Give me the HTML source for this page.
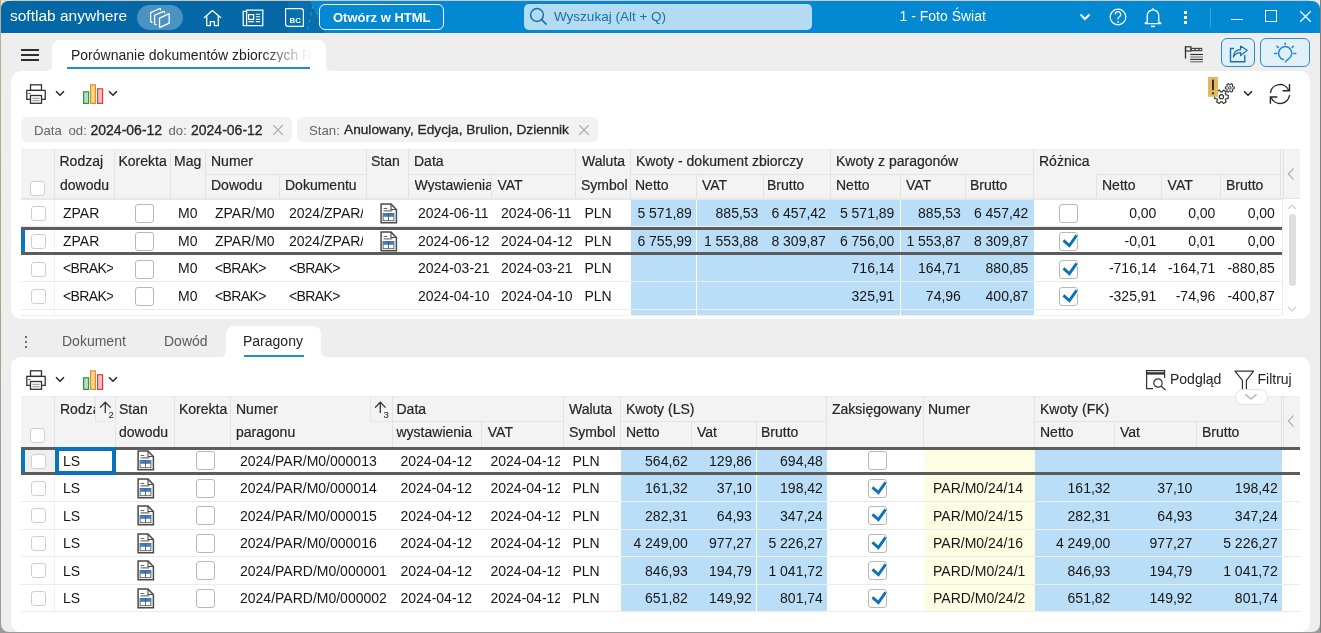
<!DOCTYPE html>
<html><head><meta charset="utf-8"><style>
*{margin:0;padding:0}
html,body{width:1321px;height:633px;overflow:hidden;background:#eee}
div,svg{position:absolute}
.t{white-space:nowrap;font-family:"Liberation Sans",sans-serif}
</style></head>
<body style="font-family:'Liberation Sans',sans-serif">
<div id="root" style="left:0;top:0;width:1321px;height:633px;overflow:hidden;will-change:transform">
<div style="left:0px;top:0px;width:1321px;height:633px;background:#9c9c9c"></div>
<div style="left:0px;top:0px;width:1321px;height:1px;background:#d3c3b8"></div>
<div style="left:0px;top:0px;width:12px;height:12px;background:#e6e0c4"></div>
<div style="left:1309px;top:0px;width:12px;height:12px;background:#e9e6e4"></div>
<div style="left:0px;top:0px;width:1px;height:633px;background:linear-gradient(#b4b29a,#a5a38e 60%,#9a9a9a)"></div>
<div style="left:1px;top:1px;width:1319px;height:631px;background:#eeeeee;border-radius:8px"></div>
<div style="left:1px;top:1px;width:1319px;height:32px;background:#0389d2;border-radius:8px 8px 0 0"></div>
<div style="left:1px;top:1px;width:330px;height:32px;background:#0368a5;border-radius:8px 0 0 0;clip-path:polygon(0 0,309px 0,324px 32px,0 32px)"></div>
<div style="left:288px;top:1px;width:40px;height:32px;background:#0670ae;clip-path:polygon(0 0,21px 0,36px 32px,0 32px)"></div>
<div class="t" style="left:10px;top:7.88px;font-size:15.5px;line-height:15.5px;color:#fff;">softlab anywhere</div>
<div style="left:137px;top:5px;width:46px;height:25px;background:#4a92c1;border-radius:13px"></div>
<div style="left:319px;top:4px;width:125px;height:26px;border:1px solid #fff;border-radius:6px;box-sizing:border-box"></div>
<div class="t" style="left:333px;top:10.50px;font-size:13px;line-height:13px;color:#fff;font-weight:700;">Otwórz w HTML</div>
<div style="left:524px;top:4px;width:288px;height:26px;background:#b3dcf3;border-radius:5px"></div>
<div class="t" style="left:554px;top:10.07px;font-size:13.5px;line-height:13.5px;color:#1b6fa8;">Wyszukaj (Alt + Q)</div>
<div class="t" style="left:899.5px;top:9.15px;font-size:14px;line-height:14px;color:#fff;">1 - Foto Świat</div>
<div style="left:52px;top:40px;width:274px;height:31px;background:#fff;border-radius:8px 8px 0 0"></div>
<div style="left:326px;top:66px;width:5px;height:5px;background:radial-gradient(circle at 100% 0,#eeeeee 4.6px,#fff 5.2px)"></div>
<div style="left:47px;top:66px;width:5px;height:5px;background:radial-gradient(circle at 0 0,#eeeeee 4.6px,#fff 5.2px)"></div>
<div class="t" style="left:71px;top:48px;width:240px;overflow:hidden;font-size:14px;line-height:14px;color:#222;-webkit-mask-image:linear-gradient(90deg,#000 0,#000 190px,rgba(0,0,0,.04) 236px);mask-image:linear-gradient(90deg,#000 0,#000 190px,rgba(0,0,0,.04) 236px)">Porównanie dokumentów zbiorczych R</div>
<div style="left:67px;top:67px;width:243px;height:2px;background:#1a8fd8"></div>
<div style="left:1221px;top:38px;width:34px;height:29px;background:#e1eff9;border:1px solid #2f8bca;border-radius:6px;box-sizing:border-box"></div>
<div style="left:1260px;top:38px;width:50px;height:29px;background:#e1eff9;border:1px solid #2f8bca;border-radius:6px;box-sizing:border-box"></div>
<div style="left:11px;top:71px;width:1299px;height:248px;background:#fff;border-radius:10px"></div>
<div style="left:21px;top:117px;width:271px;height:25px;background:#f2f2f2;border-radius:6px"></div>
<div style="left:297px;top:117px;width:301px;height:25px;background:#f2f2f2;border-radius:6px"></div>
<div style="left:226px;top:326px;width:95px;height:32px;background:#fff;border-radius:8px 8px 0 0"></div>
<div style="left:221px;top:352px;width:5px;height:5px;background:radial-gradient(circle at 0 0,#eeeeee 4.6px,#fff 5.2px)"></div>
<div style="left:321px;top:352px;width:5px;height:5px;background:radial-gradient(circle at 100% 0,#eeeeee 4.6px,#fff 5.2px)"></div>
<div class="t" style="left:62px;top:334.15px;font-size:14px;line-height:14px;color:#5c5c5c;">Dokument</div>
<div class="t" style="left:164px;top:334.15px;font-size:14px;line-height:14px;color:#5c5c5c;">Dowód</div>
<div class="t" style="left:243px;top:334.15px;font-size:14px;line-height:14px;color:#222;">Paragony</div>
<div style="left:244px;top:355px;width:60px;height:2px;background:#1a8fd8"></div>
<div style="left:11px;top:357px;width:1299px;height:274.5px;background:#fff;border-radius:10px 10px 9px 9px"></div>
<div style="left:21px;top:149px;width:1279px;height:50px;background:#f3f3f3"></div>
<div style="left:21px;top:149px;width:1279px;height:1px;background:#ececec"></div>
<div style="left:21px;top:198px;width:1279px;height:1px;background:#e6e6e6"></div>
<div style="left:54px;top:149px;width:1px;height:50px;background:#e3e3e3"></div>
<div style="left:114px;top:149px;width:1px;height:50px;background:#e3e3e3"></div>
<div style="left:170px;top:149px;width:1px;height:50px;background:#e3e3e3"></div>
<div style="left:205px;top:149px;width:1px;height:50px;background:#e3e3e3"></div>
<div style="left:366px;top:149px;width:1px;height:50px;background:#e3e3e3"></div>
<div style="left:408px;top:149px;width:1px;height:50px;background:#e3e3e3"></div>
<div style="left:575px;top:149px;width:1px;height:50px;background:#e3e3e3"></div>
<div style="left:630px;top:149px;width:1px;height:50px;background:#e3e3e3"></div>
<div style="left:830px;top:149px;width:1px;height:50px;background:#e3e3e3"></div>
<div style="left:1033px;top:149px;width:1px;height:50px;background:#e3e3e3"></div>
<div style="left:1280px;top:149px;width:1px;height:50px;background:#e3e3e3"></div>
<div style="left:279px;top:174px;width:1px;height:25px;background:#e3e3e3"></div>
<div style="left:491px;top:174px;width:1px;height:25px;background:#e3e3e3"></div>
<div style="left:696px;top:174px;width:1px;height:25px;background:#e3e3e3"></div>
<div style="left:763px;top:174px;width:1px;height:25px;background:#e3e3e3"></div>
<div style="left:900px;top:174px;width:1px;height:25px;background:#e3e3e3"></div>
<div style="left:965px;top:174px;width:1px;height:25px;background:#e3e3e3"></div>
<div style="left:1096px;top:174px;width:1px;height:25px;background:#e3e3e3"></div>
<div style="left:1161px;top:174px;width:1px;height:25px;background:#e3e3e3"></div>
<div style="left:1220px;top:174px;width:1px;height:25px;background:#e3e3e3"></div>
<div style="left:205px;top:174px;width:161px;height:1px;background:#e3e3e3"></div>
<div style="left:408px;top:174px;width:167px;height:1px;background:#e3e3e3"></div>
<div style="left:630px;top:174px;width:200px;height:1px;background:#e3e3e3"></div>
<div style="left:830px;top:174px;width:203px;height:1px;background:#e3e3e3"></div>
<div style="left:1096px;top:174px;width:184px;height:1px;background:#e3e3e3"></div>
<div class="t" style="left:59.5px;top:154.15px;font-size:14px;line-height:14px;color:#262626;-webkit-text-stroke:0.2px #262626;">Rodzaj</div>
<div class="t" style="left:118.5px;top:154.15px;font-size:14px;line-height:14px;color:#262626;-webkit-text-stroke:0.2px #262626;">Korekta</div>
<div class="t" style="left:174px;top:154.15px;font-size:14px;line-height:14px;color:#262626;-webkit-text-stroke:0.2px #262626;">Mag</div>
<div class="t" style="left:211px;top:154.15px;font-size:14px;line-height:14px;color:#262626;-webkit-text-stroke:0.2px #262626;">Numer</div>
<div class="t" style="left:371px;top:154.15px;font-size:14px;line-height:14px;color:#262626;-webkit-text-stroke:0.2px #262626;">Stan</div>
<div class="t" style="left:414px;top:154.15px;font-size:14px;line-height:14px;color:#262626;-webkit-text-stroke:0.2px #262626;">Data</div>
<div class="t" style="left:582px;top:154.15px;font-size:14px;line-height:14px;color:#262626;-webkit-text-stroke:0.2px #262626;">Waluta</div>
<div class="t" style="left:636px;top:154.15px;font-size:14px;line-height:14px;color:#262626;-webkit-text-stroke:0.2px #262626;">Kwoty - dokument zbiorczy</div>
<div class="t" style="left:836px;top:154.15px;font-size:14px;line-height:14px;color:#262626;-webkit-text-stroke:0.2px #262626;">Kwoty z paragonów</div>
<div class="t" style="left:1039px;top:154.15px;font-size:14px;line-height:14px;color:#262626;-webkit-text-stroke:0.2px #262626;">Różnica</div>
<div class="t" style="left:60px;top:178.15px;font-size:14px;line-height:14px;color:#262626;-webkit-text-stroke:0.2px #262626;">dowodu</div>
<div class="t" style="left:211px;top:178.15px;font-size:14px;line-height:14px;color:#262626;-webkit-text-stroke:0.2px #262626;">Dowodu</div>
<div class="t" style="left:285px;top:178.15px;font-size:14px;line-height:14px;color:#262626;-webkit-text-stroke:0.2px #262626;">Dokumentu</div>
<div class="t" style="left:414.5px;top:178.15px;font-size:14px;line-height:14px;color:#262626;width:76.5px;overflow:hidden;-webkit-text-stroke:0.2px #262626;">Wystawienia</div>
<div class="t" style="left:497.4px;top:178.15px;font-size:14px;line-height:14px;color:#262626;-webkit-text-stroke:0.2px #262626;">VAT</div>
<div class="t" style="left:581px;top:178.15px;font-size:14px;line-height:14px;color:#262626;-webkit-text-stroke:0.2px #262626;">Symbol</div>
<div class="t" style="left:635px;top:178.15px;font-size:14px;line-height:14px;color:#262626;-webkit-text-stroke:0.2px #262626;">Netto</div>
<div class="t" style="left:702px;top:178.15px;font-size:14px;line-height:14px;color:#262626;-webkit-text-stroke:0.2px #262626;">VAT</div>
<div class="t" style="left:767px;top:178.15px;font-size:14px;line-height:14px;color:#262626;-webkit-text-stroke:0.2px #262626;">Brutto</div>
<div class="t" style="left:836px;top:178.15px;font-size:14px;line-height:14px;color:#262626;-webkit-text-stroke:0.2px #262626;">Netto</div>
<div class="t" style="left:906px;top:178.15px;font-size:14px;line-height:14px;color:#262626;-webkit-text-stroke:0.2px #262626;">VAT</div>
<div class="t" style="left:970px;top:178.15px;font-size:14px;line-height:14px;color:#262626;-webkit-text-stroke:0.2px #262626;">Brutto</div>
<div class="t" style="left:1102px;top:178.15px;font-size:14px;line-height:14px;color:#262626;-webkit-text-stroke:0.2px #262626;">Netto</div>
<div class="t" style="left:1167.6px;top:178.15px;font-size:14px;line-height:14px;color:#262626;-webkit-text-stroke:0.2px #262626;">VAT</div>
<div class="t" style="left:1226px;top:178.15px;font-size:14px;line-height:14px;color:#262626;-webkit-text-stroke:0.2px #262626;">Brutto</div>
<div style="left:1283px;top:149px;width:1px;height:50px;background:#e3e3e3"></div>
<div style="left:30px;top:181px;width:15px;height:15px;box-sizing:border-box;border:1px solid #cfcfcf;border-radius:3px;background:#fff"></div>
<svg style="position:absolute;left:1286px;top:167px" width="10" height="14" viewBox="0 0 10 14"><path d="M7.5 1.5 L2.5 7 L7.5 12.5" fill="none" stroke="#a0a0a0" stroke-width="1.1"/></svg>
<div style="left:0;top:0;width:1321px;height:316px;overflow:hidden">
<div style="position:absolute;left:631px;top:199px;width:403px;height:28px;background:#bbdef8"></div>
<div style="position:absolute;left:696px;top:199px;width:1px;height:28px;background:#fff"></div>
<div style="position:absolute;left:900px;top:199px;width:1px;height:28px;background:#fff"></div>
<div style="position:absolute;left:21px;top:226px;width:1261px;height:1px;background:#ebebeb"></div>
<div style="position:absolute;left:631px;top:226px;width:403px;height:1px;background:#efefef"></div>
<div style="position:absolute;left:54px;top:199px;width:1px;height:28px;background:#f0f0f0"></div>
<div class="t" style="left:63px;width:50px;overflow:hidden;top:206.15px;font-size:14px;line-height:14px;color:#161616;">ZPAR</div>
<div class="t" style="left:178px;top:206.15px;font-size:14px;line-height:14px;color:#161616;">M0</div>
<div class="t" style="left:215px;width:59.5px;overflow:hidden;top:206.15px;font-size:14px;line-height:14px;color:#161616;">ZPAR/M0/24/1</div>
<div class="t" style="left:289px;width:74px;overflow:hidden;top:206.15px;font-size:14px;line-height:14px;color:#161616;">2024/ZPAR/M0/1</div>
<div class="t" style="left:418px;top:206.15px;font-size:14px;line-height:14px;color:#161616;">2024-06-11</div>
<div class="t" style="left:501px;top:206.15px;font-size:14px;line-height:14px;color:#161616;">2024-06-11</div>
<div class="t" style="left:584.5px;top:206.15px;font-size:14px;line-height:14px;color:#161616;">PLN</div>
<div class="t" style="left:491.90px;width:200px;text-align:right;top:206.15px;font-size:14px;line-height:14px;color:#161616">5 571,89</div>
<div class="t" style="left:558.40px;width:200px;text-align:right;top:206.15px;font-size:14px;line-height:14px;color:#161616">885,53</div>
<div class="t" style="left:625.90px;width:200px;text-align:right;top:206.15px;font-size:14px;line-height:14px;color:#161616">6 457,42</div>
<div class="t" style="left:694.40px;width:200px;text-align:right;top:206.15px;font-size:14px;line-height:14px;color:#161616">5 571,89</div>
<div class="t" style="left:760.90px;width:200px;text-align:right;top:206.15px;font-size:14px;line-height:14px;color:#161616">885,53</div>
<div class="t" style="left:828.40px;width:200px;text-align:right;top:206.15px;font-size:14px;line-height:14px;color:#161616">6 457,42</div>
<div class="t" style="left:956.40px;width:200px;text-align:right;top:206.15px;font-size:14px;line-height:14px;color:#161616">0,00</div>
<div class="t" style="left:1015.40px;width:200px;text-align:right;top:206.15px;font-size:14px;line-height:14px;color:#161616">0,00</div>
<div class="t" style="left:1074.90px;width:200px;text-align:right;top:206.15px;font-size:14px;line-height:14px;color:#161616">0,00</div>
<div style="left:31px;top:206px;width:15px;height:15px;box-sizing:border-box;border:1px solid #cfcfcf;border-radius:3px;background:#fff"></div>
<div style="left:135px;top:204px;width:19px;height:19px;box-sizing:border-box;border:1.3px solid #b8b8b8;border-radius:3px;background:#fff"></div>
<div style="left:1059px;top:204px;width:19px;height:19px;box-sizing:border-box;border:1.3px solid #b8b8b8;border-radius:3px;background:#fff"></div>
<svg style="position:absolute;left:380px;top:203px" width="18" height="21" viewBox="0 0 18 21"><path d="M1.1 1.1 H11 L16.4 6.5 V19.8 H1.1 Z" fill="#fff" stroke="#4a4a4a" stroke-width="1.5"/><path d="M11 1.1 V6.5 H16.4" fill="none" stroke="#4a4a4a" stroke-width="1.1"/><rect x="3.6" y="5" width="3.6" height="1" fill="#666"/><rect x="3.6" y="7.2" width="8.8" height="1.3" fill="#777"/><rect x="3.1" y="10.5" width="10.8" height="7.2" fill="#fff" stroke="#555" stroke-width="0.9"/><rect x="3.1" y="10.5" width="10.8" height="3.3" fill="#3a80c8"/><rect x="8.1" y="10.5" width="0.9" height="7.2" fill="#555"/></svg>
<div style="position:absolute;left:631px;top:227px;width:403px;height:28px;background:#bbdef8"></div>
<div style="position:absolute;left:696px;top:227px;width:1px;height:28px;background:#fff"></div>
<div style="position:absolute;left:900px;top:227px;width:1px;height:28px;background:#fff"></div>
<div style="position:absolute;left:21px;top:254px;width:1261px;height:1px;background:#ebebeb"></div>
<div style="position:absolute;left:631px;top:254px;width:403px;height:1px;background:#efefef"></div>
<div style="position:absolute;left:54px;top:227px;width:1px;height:28px;background:#f0f0f0"></div>
<div class="t" style="left:63px;width:50px;overflow:hidden;top:234.15px;font-size:14px;line-height:14px;color:#161616;">ZPAR</div>
<div class="t" style="left:178px;top:234.15px;font-size:14px;line-height:14px;color:#161616;">M0</div>
<div class="t" style="left:215px;width:59.5px;overflow:hidden;top:234.15px;font-size:14px;line-height:14px;color:#161616;">ZPAR/M0/24/2</div>
<div class="t" style="left:289px;width:74px;overflow:hidden;top:234.15px;font-size:14px;line-height:14px;color:#161616;">2024/ZPAR/M0/2</div>
<div class="t" style="left:418px;top:234.15px;font-size:14px;line-height:14px;color:#161616;">2024-06-12</div>
<div class="t" style="left:501px;top:234.15px;font-size:14px;line-height:14px;color:#161616;">2024-04-12</div>
<div class="t" style="left:584.5px;top:234.15px;font-size:14px;line-height:14px;color:#161616;">PLN</div>
<div class="t" style="left:491.90px;width:200px;text-align:right;top:234.15px;font-size:14px;line-height:14px;color:#161616">6 755,99</div>
<div class="t" style="left:558.40px;width:200px;text-align:right;top:234.15px;font-size:14px;line-height:14px;color:#161616">1 553,88</div>
<div class="t" style="left:625.90px;width:200px;text-align:right;top:234.15px;font-size:14px;line-height:14px;color:#161616">8 309,87</div>
<div class="t" style="left:694.40px;width:200px;text-align:right;top:234.15px;font-size:14px;line-height:14px;color:#161616">6 756,00</div>
<div class="t" style="left:760.90px;width:200px;text-align:right;top:234.15px;font-size:14px;line-height:14px;color:#161616">1 553,87</div>
<div class="t" style="left:828.40px;width:200px;text-align:right;top:234.15px;font-size:14px;line-height:14px;color:#161616">8 309,87</div>
<div class="t" style="left:956.40px;width:200px;text-align:right;top:234.15px;font-size:14px;line-height:14px;color:#161616">-0,01</div>
<div class="t" style="left:1015.40px;width:200px;text-align:right;top:234.15px;font-size:14px;line-height:14px;color:#161616">0,01</div>
<div class="t" style="left:1074.90px;width:200px;text-align:right;top:234.15px;font-size:14px;line-height:14px;color:#161616">0,00</div>
<div style="left:31px;top:234px;width:15px;height:15px;box-sizing:border-box;border:1px solid #cfcfcf;border-radius:3px;background:#fff"></div>
<div style="left:135px;top:232px;width:19px;height:19px;box-sizing:border-box;border:1.3px solid #b8b8b8;border-radius:3px;background:#fff"></div>
<div style="left:1059px;top:232px;width:19px;height:19px;box-sizing:border-box;border:1.3px solid #b8b8b8;border-radius:3px;background:#fff"></div>
<svg style="position:absolute;left:1059px;top:232px" width="19" height="19" viewBox="0 0 19 19"><path d="M4.4 8.4 L10.4 13.6 L17.6 3.4" fill="none" stroke="#fff" stroke-width="5"/><path d="M4.4 8.4 L10.4 13.6 L17.6 3.4" fill="none" stroke="#0a72b8" stroke-width="2.8"/></svg>
<svg style="position:absolute;left:380px;top:231px" width="18" height="21" viewBox="0 0 18 21"><path d="M1.1 1.1 H11 L16.4 6.5 V19.8 H1.1 Z" fill="#fff" stroke="#4a4a4a" stroke-width="1.5"/><path d="M11 1.1 V6.5 H16.4" fill="none" stroke="#4a4a4a" stroke-width="1.1"/><rect x="3.6" y="5" width="3.6" height="1" fill="#666"/><rect x="3.6" y="7.2" width="8.8" height="1.3" fill="#777"/><rect x="3.1" y="10.5" width="10.8" height="7.2" fill="#fff" stroke="#555" stroke-width="0.9"/><rect x="3.1" y="10.5" width="10.8" height="3.3" fill="#3a80c8"/><rect x="8.1" y="10.5" width="0.9" height="7.2" fill="#555"/></svg>
<div style="position:absolute;left:631px;top:255px;width:403px;height:27px;background:#bbdef8"></div>
<div style="position:absolute;left:696px;top:255px;width:1px;height:27px;background:#fff"></div>
<div style="position:absolute;left:900px;top:255px;width:1px;height:27px;background:#fff"></div>
<div style="position:absolute;left:21px;top:281px;width:1261px;height:1px;background:#ebebeb"></div>
<div style="position:absolute;left:631px;top:281px;width:403px;height:1px;background:#efefef"></div>
<div style="position:absolute;left:54px;top:255px;width:1px;height:27px;background:#f0f0f0"></div>
<div class="t" style="left:63px;width:50px;overflow:hidden;top:261.15px;font-size:14px;line-height:14px;color:#161616;letter-spacing:-0.6px">&lt;BRAK&gt;</div>
<div class="t" style="left:178px;top:261.15px;font-size:14px;line-height:14px;color:#161616;">M0</div>
<div class="t" style="left:215px;width:59.5px;overflow:hidden;top:261.15px;font-size:14px;line-height:14px;color:#161616;letter-spacing:-0.6px">&lt;BRAK&gt;</div>
<div class="t" style="left:289px;width:74px;overflow:hidden;top:261.15px;font-size:14px;line-height:14px;color:#161616;letter-spacing:-0.6px">&lt;BRAK&gt;</div>
<div class="t" style="left:418px;top:261.15px;font-size:14px;line-height:14px;color:#161616;">2024-03-21</div>
<div class="t" style="left:501px;top:261.15px;font-size:14px;line-height:14px;color:#161616;">2024-03-21</div>
<div class="t" style="left:584.5px;top:261.15px;font-size:14px;line-height:14px;color:#161616;">PLN</div>
<div class="t" style="left:694.40px;width:200px;text-align:right;top:261.15px;font-size:14px;line-height:14px;color:#161616">716,14</div>
<div class="t" style="left:760.90px;width:200px;text-align:right;top:261.15px;font-size:14px;line-height:14px;color:#161616">164,71</div>
<div class="t" style="left:828.40px;width:200px;text-align:right;top:261.15px;font-size:14px;line-height:14px;color:#161616">880,85</div>
<div class="t" style="left:956.40px;width:200px;text-align:right;top:261.15px;font-size:14px;line-height:14px;color:#161616">-716,14</div>
<div class="t" style="left:1015.40px;width:200px;text-align:right;top:261.15px;font-size:14px;line-height:14px;color:#161616">-164,71</div>
<div class="t" style="left:1074.90px;width:200px;text-align:right;top:261.15px;font-size:14px;line-height:14px;color:#161616">-880,85</div>
<div style="left:31px;top:262px;width:15px;height:15px;box-sizing:border-box;border:1px solid #cfcfcf;border-radius:3px;background:#fff"></div>
<div style="left:135px;top:260px;width:19px;height:19px;box-sizing:border-box;border:1.3px solid #b8b8b8;border-radius:3px;background:#fff"></div>
<div style="left:1059px;top:260px;width:19px;height:19px;box-sizing:border-box;border:1.3px solid #b8b8b8;border-radius:3px;background:#fff"></div>
<svg style="position:absolute;left:1059px;top:260px" width="19" height="19" viewBox="0 0 19 19"><path d="M4.4 8.4 L10.4 13.6 L17.6 3.4" fill="none" stroke="#fff" stroke-width="5"/><path d="M4.4 8.4 L10.4 13.6 L17.6 3.4" fill="none" stroke="#0a72b8" stroke-width="2.8"/></svg>
<div style="position:absolute;left:631px;top:282px;width:403px;height:28px;background:#bbdef8"></div>
<div style="position:absolute;left:696px;top:282px;width:1px;height:28px;background:#fff"></div>
<div style="position:absolute;left:900px;top:282px;width:1px;height:28px;background:#fff"></div>
<div style="position:absolute;left:21px;top:309px;width:1261px;height:1px;background:#ebebeb"></div>
<div style="position:absolute;left:631px;top:309px;width:403px;height:1px;background:#efefef"></div>
<div style="position:absolute;left:54px;top:282px;width:1px;height:28px;background:#f0f0f0"></div>
<div class="t" style="left:63px;width:50px;overflow:hidden;top:289.15px;font-size:14px;line-height:14px;color:#161616;letter-spacing:-0.6px">&lt;BRAK&gt;</div>
<div class="t" style="left:178px;top:289.15px;font-size:14px;line-height:14px;color:#161616;">M0</div>
<div class="t" style="left:215px;width:59.5px;overflow:hidden;top:289.15px;font-size:14px;line-height:14px;color:#161616;letter-spacing:-0.6px">&lt;BRAK&gt;</div>
<div class="t" style="left:289px;width:74px;overflow:hidden;top:289.15px;font-size:14px;line-height:14px;color:#161616;letter-spacing:-0.6px">&lt;BRAK&gt;</div>
<div class="t" style="left:418px;top:289.15px;font-size:14px;line-height:14px;color:#161616;">2024-04-10</div>
<div class="t" style="left:501px;top:289.15px;font-size:14px;line-height:14px;color:#161616;">2024-04-10</div>
<div class="t" style="left:584.5px;top:289.15px;font-size:14px;line-height:14px;color:#161616;">PLN</div>
<div class="t" style="left:694.40px;width:200px;text-align:right;top:289.15px;font-size:14px;line-height:14px;color:#161616">325,91</div>
<div class="t" style="left:760.90px;width:200px;text-align:right;top:289.15px;font-size:14px;line-height:14px;color:#161616">74,96</div>
<div class="t" style="left:828.40px;width:200px;text-align:right;top:289.15px;font-size:14px;line-height:14px;color:#161616">400,87</div>
<div class="t" style="left:956.40px;width:200px;text-align:right;top:289.15px;font-size:14px;line-height:14px;color:#161616">-325,91</div>
<div class="t" style="left:1015.40px;width:200px;text-align:right;top:289.15px;font-size:14px;line-height:14px;color:#161616">-74,96</div>
<div class="t" style="left:1074.90px;width:200px;text-align:right;top:289.15px;font-size:14px;line-height:14px;color:#161616">-400,87</div>
<div style="left:31px;top:289px;width:15px;height:15px;box-sizing:border-box;border:1px solid #cfcfcf;border-radius:3px;background:#fff"></div>
<div style="left:135px;top:287px;width:19px;height:19px;box-sizing:border-box;border:1.3px solid #b8b8b8;border-radius:3px;background:#fff"></div>
<div style="left:1059px;top:287px;width:19px;height:19px;box-sizing:border-box;border:1.3px solid #b8b8b8;border-radius:3px;background:#fff"></div>
<svg style="position:absolute;left:1059px;top:287px" width="19" height="19" viewBox="0 0 19 19"><path d="M4.4 8.4 L10.4 13.6 L17.6 3.4" fill="none" stroke="#fff" stroke-width="5"/><path d="M4.4 8.4 L10.4 13.6 L17.6 3.4" fill="none" stroke="#0a72b8" stroke-width="2.8"/></svg>
<div style="position:absolute;left:631px;top:310px;width:403px;height:28px;background:#bbdef8"></div>
<div style="position:absolute;left:696px;top:310px;width:1px;height:28px;background:#fff"></div>
<div style="position:absolute;left:900px;top:310px;width:1px;height:28px;background:#fff"></div>
<div style="position:absolute;left:21px;top:337px;width:1261px;height:1px;background:#ebebeb"></div>
<div style="position:absolute;left:631px;top:337px;width:403px;height:1px;background:#efefef"></div>
<div style="position:absolute;left:54px;top:310px;width:1px;height:28px;background:#f0f0f0"></div>
<div style="left:31px;top:317px;width:15px;height:15px;box-sizing:border-box;border:1px solid #cfcfcf;border-radius:3px;background:#fff"></div>
<div style="left:135px;top:315px;width:19px;height:19px;box-sizing:border-box;border:1.3px solid #b8b8b8;border-radius:3px;background:#fff"></div>
<div style="left:1059px;top:315px;width:19px;height:19px;box-sizing:border-box;border:1.3px solid #b8b8b8;border-radius:3px;background:#fff"></div>
</div>
<div style="left:21px;top:199px;width:1262px;height:1px;background:#e8e8e8"></div>
<div style="left:21px;top:227px;width:1261px;height:3px;background:#5c5c5c"></div>
<div style="left:21px;top:252px;width:1261px;height:3px;background:#5c5c5c"></div>
<div style="left:21px;top:230px;width:4px;height:22px;background:#0a78c0"></div>
<svg style="position:absolute;left:1286px;top:203px" width="12" height="8" viewBox="0 0 12 8"><path d="M2 6 L6 2 L10 6" fill="none" stroke="#cfcfcf" stroke-width="1.2"/></svg>
<div style="left:1289px;top:214px;width:7px;height:72px;background:#dedede;border-radius:4px"></div>
<div style="left:1282px;top:199px;width:1px;height:117px;background:#ececec"></div>
<div style="left:21px;top:315px;width:1262px;height:1px;background:#f0f0f0"></div>
<svg style="position:absolute;left:1286px;top:305px" width="12" height="8" viewBox="0 0 12 8"><path d="M2 2 L6 6 L10 2" fill="none" stroke="#cfcfcf" stroke-width="1.2"/></svg>
<div style="left:21px;top:396px;width:1279px;height:51px;background:#f3f3f3"></div>
<div style="left:21px;top:396px;width:1279px;height:1px;background:#ececec"></div>
<div style="left:54px;top:396px;width:1px;height:51px;background:#e3e3e3"></div>
<div style="left:115px;top:396px;width:1px;height:51px;background:#e3e3e3"></div>
<div style="left:174px;top:396px;width:1px;height:51px;background:#e3e3e3"></div>
<div style="left:230px;top:396px;width:1px;height:51px;background:#e3e3e3"></div>
<div style="left:392px;top:396px;width:1px;height:51px;background:#e3e3e3"></div>
<div style="left:563px;top:396px;width:1px;height:51px;background:#e3e3e3"></div>
<div style="left:620px;top:396px;width:1px;height:51px;background:#e3e3e3"></div>
<div style="left:826px;top:396px;width:1px;height:51px;background:#e3e3e3"></div>
<div style="left:923px;top:396px;width:1px;height:51px;background:#e3e3e3"></div>
<div style="left:1034px;top:396px;width:1px;height:51px;background:#e3e3e3"></div>
<div style="left:1281px;top:396px;width:1px;height:51px;background:#e3e3e3"></div>
<div style="left:481px;top:421px;width:1px;height:26px;background:#e3e3e3"></div>
<div style="left:691px;top:421px;width:1px;height:26px;background:#e3e3e3"></div>
<div style="left:756px;top:421px;width:1px;height:26px;background:#e3e3e3"></div>
<div style="left:1114px;top:421px;width:1px;height:26px;background:#e3e3e3"></div>
<div style="left:1196px;top:421px;width:1px;height:26px;background:#e3e3e3"></div>
<div style="left:392px;top:421px;width:171px;height:1px;background:#e3e3e3"></div>
<div style="left:620px;top:421px;width:206px;height:1px;background:#e3e3e3"></div>
<div style="left:1034px;top:421px;width:247px;height:1px;background:#e3e3e3"></div>
<div class="t" style="left:60px;top:402.15px;font-size:14px;line-height:14px;color:#262626;width:35px;overflow:hidden;-webkit-text-stroke:0.2px #262626;">Rodzaj</div>
<div class="t" style="left:119px;top:402.15px;font-size:14px;line-height:14px;color:#262626;-webkit-text-stroke:0.2px #262626;">Stan</div>
<div class="t" style="left:179px;top:402.15px;font-size:14px;line-height:14px;color:#262626;-webkit-text-stroke:0.2px #262626;">Korekta</div>
<div class="t" style="left:236px;top:402.15px;font-size:14px;line-height:14px;color:#262626;-webkit-text-stroke:0.2px #262626;">Numer</div>
<div class="t" style="left:396.5px;top:402.15px;font-size:14px;line-height:14px;color:#262626;-webkit-text-stroke:0.2px #262626;">Data</div>
<div class="t" style="left:569px;top:402.15px;font-size:14px;line-height:14px;color:#262626;-webkit-text-stroke:0.2px #262626;">Waluta</div>
<div class="t" style="left:626px;top:402.15px;font-size:14px;line-height:14px;color:#262626;-webkit-text-stroke:0.2px #262626;">Kwoty (LS)</div>
<div class="t" style="left:832px;top:402.15px;font-size:14px;line-height:14px;color:#262626;-webkit-text-stroke:0.2px #262626;">Zaksięgowany</div>
<div class="t" style="left:928px;top:402.15px;font-size:14px;line-height:14px;color:#262626;-webkit-text-stroke:0.2px #262626;">Numer</div>
<div class="t" style="left:1040px;top:402.15px;font-size:14px;line-height:14px;color:#262626;-webkit-text-stroke:0.2px #262626;">Kwoty (FK)</div>
<div class="t" style="left:119px;top:425.15px;font-size:14px;line-height:14px;color:#262626;-webkit-text-stroke:0.2px #262626;">dowodu</div>
<div class="t" style="left:236px;top:425.15px;font-size:14px;line-height:14px;color:#262626;-webkit-text-stroke:0.2px #262626;">paragonu</div>
<div class="t" style="left:396.5px;top:425.15px;font-size:14px;line-height:14px;color:#262626;-webkit-text-stroke:0.2px #262626;">wystawienia</div>
<div class="t" style="left:487.8px;top:425.15px;font-size:14px;line-height:14px;color:#262626;-webkit-text-stroke:0.2px #262626;">VAT</div>
<div class="t" style="left:569px;top:425.15px;font-size:14px;line-height:14px;color:#262626;-webkit-text-stroke:0.2px #262626;">Symbol</div>
<div class="t" style="left:626px;top:425.15px;font-size:14px;line-height:14px;color:#262626;-webkit-text-stroke:0.2px #262626;">Netto</div>
<div class="t" style="left:697px;top:425.15px;font-size:14px;line-height:14px;color:#262626;-webkit-text-stroke:0.2px #262626;">Vat</div>
<div class="t" style="left:761px;top:425.15px;font-size:14px;line-height:14px;color:#262626;-webkit-text-stroke:0.2px #262626;">Brutto</div>
<div class="t" style="left:1040px;top:425.15px;font-size:14px;line-height:14px;color:#262626;-webkit-text-stroke:0.2px #262626;">Netto</div>
<div class="t" style="left:1120px;top:425.15px;font-size:14px;line-height:14px;color:#262626;-webkit-text-stroke:0.2px #262626;">Vat</div>
<div class="t" style="left:1202px;top:425.15px;font-size:14px;line-height:14px;color:#262626;-webkit-text-stroke:0.2px #262626;">Brutto</div>
<div style="left:95px;top:397px;width:20px;height:25px;background:#f3f3f3;border-left:1px solid #e4e4e4;border-bottom:1px solid #e8e8e8;box-sizing:border-box"></div><svg style="left:95px;top:397px" width="21" height="25" viewBox="0 0 21 25"><path d="M10.3 16 V5.4 M5 10.6 L10.3 5.2 L15.6 10.6" fill="none" stroke="#333" stroke-width="1.3"/><text x="13.6" y="21" font-size="9.6" font-family="Liberation Sans" fill="#222">2</text></svg>
<div style="left:370px;top:397px;width:21px;height:25px;background:#f3f3f3;border-left:1px solid #e4e4e4;border-bottom:1px solid #e8e8e8;box-sizing:border-box"></div><svg style="left:370px;top:397px" width="21" height="25" viewBox="0 0 21 25"><path d="M10.3 16 V5.4 M5 10.6 L10.3 5.2 L15.6 10.6" fill="none" stroke="#333" stroke-width="1.3"/><text x="13.6" y="21" font-size="9.6" font-family="Liberation Sans" fill="#222">3</text></svg>
<div style="left:1283px;top:396px;width:1px;height:51px;background:#e3e3e3"></div>
<div style="left:30px;top:428px;width:15px;height:15px;box-sizing:border-box;border:1px solid #cfcfcf;border-radius:3px;background:#fff"></div>
<svg style="left:1286px;top:414px" width="10" height="14" viewBox="0 0 10 14"><path d="M7.5 1.5 L2.5 7 L7.5 12.5" fill="none" stroke="#a0a0a0" stroke-width="1.1"/></svg>
<div style="left:621px;top:447px;width:206px;height:28px;background:#bbdef8"></div>
<div style="left:756px;top:447px;width:1px;height:28px;background:#fff"></div>
<div style="left:924px;top:447px;width:111px;height:28px;background:#fdfde4"></div>
<div style="left:1035px;top:447px;width:247px;height:28px;background:#bbdef8"></div>
<div style="left:21px;top:474px;width:1279px;height:1px;background:#ebebeb"></div>
<div style="left:621px;top:474px;width:206px;height:1px;background:#efefef"></div>
<div style="left:1035px;top:474px;width:247px;height:1px;background:#efefef"></div>
<div style="left:54px;top:447px;width:1px;height:28px;background:#f0f0f0"></div>
<div class="t" style="left:63px;top:454.15px;font-size:14px;line-height:14px;color:#161616;">LS</div>
<div class="t" style="left:240px;top:454.15px;font-size:14px;line-height:14px;color:#161616;">2024/PAR/M0/000013</div>
<div class="t" style="left:400.5px;top:454.15px;font-size:14px;line-height:14px;color:#161616;">2024-04-12</div>
<div class="t" style="left:490.5px;width:69px;overflow:hidden;top:454.15px;font-size:14px;line-height:14px;color:#161616;">2024-04-12</div>
<div class="t" style="left:572.5px;top:454.15px;font-size:14px;line-height:14px;color:#161616;">PLN</div>
<div class="t" style="left:487.90px;width:200px;text-align:right;top:454.15px;font-size:14px;line-height:14px;color:#161616">564,62</div>
<div class="t" style="left:551.90px;width:200px;text-align:right;top:454.15px;font-size:14px;line-height:14px;color:#161616">129,86</div>
<div class="t" style="left:622.90px;width:200px;text-align:right;top:454.15px;font-size:14px;line-height:14px;color:#161616">694,48</div>
<div style="left:31px;top:453px;width:15px;height:15px;box-sizing:border-box;border:1px solid #cfcfcf;border-radius:3px;background:#fff"></div>
<svg style="position:absolute;left:137px;top:450px" width="18" height="21" viewBox="0 0 18 21"><path d="M1.1 1.1 H11 L16.4 6.5 V19.8 H1.1 Z" fill="#fff" stroke="#4a4a4a" stroke-width="1.5"/><path d="M11 1.1 V6.5 H16.4" fill="none" stroke="#4a4a4a" stroke-width="1.1"/><rect x="3.6" y="5" width="3.6" height="1" fill="#666"/><rect x="3.6" y="7.2" width="8.8" height="1.3" fill="#777"/><rect x="3.1" y="10.5" width="10.8" height="7.2" fill="#fff" stroke="#555" stroke-width="0.9"/><rect x="3.1" y="10.5" width="10.8" height="3.3" fill="#3a80c8"/><rect x="8.1" y="10.5" width="0.9" height="7.2" fill="#555"/></svg>
<div style="left:196px;top:451px;width:19px;height:19px;box-sizing:border-box;border:1.3px solid #b8b8b8;border-radius:3px;background:#fff"></div>
<div style="left:868px;top:451px;width:19px;height:19px;box-sizing:border-box;border:1.3px solid #b8b8b8;border-radius:3px;background:#fff"></div>
<div style="left:621px;top:475px;width:206px;height:27px;background:#bbdef8"></div>
<div style="left:756px;top:475px;width:1px;height:27px;background:#fff"></div>
<div style="left:924px;top:475px;width:111px;height:27px;background:#fdfde4"></div>
<div style="left:1035px;top:475px;width:247px;height:27px;background:#bbdef8"></div>
<div style="left:21px;top:501px;width:1279px;height:1px;background:#ebebeb"></div>
<div style="left:621px;top:501px;width:206px;height:1px;background:#efefef"></div>
<div style="left:1035px;top:501px;width:247px;height:1px;background:#efefef"></div>
<div style="left:54px;top:475px;width:1px;height:27px;background:#f0f0f0"></div>
<div class="t" style="left:63px;top:481.15px;font-size:14px;line-height:14px;color:#161616;">LS</div>
<div class="t" style="left:240px;top:481.15px;font-size:14px;line-height:14px;color:#161616;">2024/PAR/M0/000014</div>
<div class="t" style="left:400.5px;top:481.15px;font-size:14px;line-height:14px;color:#161616;">2024-04-12</div>
<div class="t" style="left:490.5px;width:69px;overflow:hidden;top:481.15px;font-size:14px;line-height:14px;color:#161616;">2024-04-12</div>
<div class="t" style="left:572.5px;top:481.15px;font-size:14px;line-height:14px;color:#161616;">PLN</div>
<div class="t" style="left:487.90px;width:200px;text-align:right;top:481.15px;font-size:14px;line-height:14px;color:#161616">161,32</div>
<div class="t" style="left:551.90px;width:200px;text-align:right;top:481.15px;font-size:14px;line-height:14px;color:#161616">37,10</div>
<div class="t" style="left:622.90px;width:200px;text-align:right;top:481.15px;font-size:14px;line-height:14px;color:#161616">198,42</div>
<div class="t" style="left:933px;top:481.15px;font-size:14px;line-height:14px;color:#161616;">PAR/M0/24/14</div>
<div class="t" style="left:910.40px;width:200px;text-align:right;top:481.15px;font-size:14px;line-height:14px;color:#161616">161,32</div>
<div class="t" style="left:992.40px;width:200px;text-align:right;top:481.15px;font-size:14px;line-height:14px;color:#161616">37,10</div>
<div class="t" style="left:1077.70px;width:200px;text-align:right;top:481.15px;font-size:14px;line-height:14px;color:#161616">198,42</div>
<div style="left:31px;top:481px;width:15px;height:15px;box-sizing:border-box;border:1px solid #cfcfcf;border-radius:3px;background:#fff"></div>
<svg style="position:absolute;left:137px;top:478px" width="18" height="21" viewBox="0 0 18 21"><path d="M1.1 1.1 H11 L16.4 6.5 V19.8 H1.1 Z" fill="#fff" stroke="#4a4a4a" stroke-width="1.5"/><path d="M11 1.1 V6.5 H16.4" fill="none" stroke="#4a4a4a" stroke-width="1.1"/><rect x="3.6" y="5" width="3.6" height="1" fill="#666"/><rect x="3.6" y="7.2" width="8.8" height="1.3" fill="#777"/><rect x="3.1" y="10.5" width="10.8" height="7.2" fill="#fff" stroke="#555" stroke-width="0.9"/><rect x="3.1" y="10.5" width="10.8" height="3.3" fill="#3a80c8"/><rect x="8.1" y="10.5" width="0.9" height="7.2" fill="#555"/></svg>
<div style="left:196px;top:479px;width:19px;height:19px;box-sizing:border-box;border:1.3px solid #b8b8b8;border-radius:3px;background:#fff"></div>
<div style="left:868px;top:479px;width:19px;height:19px;box-sizing:border-box;border:1.3px solid #b8b8b8;border-radius:3px;background:#fff"></div>
<svg style="position:absolute;left:868px;top:479px" width="19" height="19" viewBox="0 0 19 19"><path d="M4.4 8.4 L10.4 13.6 L17.6 3.4" fill="none" stroke="#fff" stroke-width="5"/><path d="M4.4 8.4 L10.4 13.6 L17.6 3.4" fill="none" stroke="#0a72b8" stroke-width="2.8"/></svg>
<div style="left:621px;top:502px;width:206px;height:28px;background:#bbdef8"></div>
<div style="left:756px;top:502px;width:1px;height:28px;background:#fff"></div>
<div style="left:924px;top:502px;width:111px;height:28px;background:#fdfde4"></div>
<div style="left:1035px;top:502px;width:247px;height:28px;background:#bbdef8"></div>
<div style="left:21px;top:529px;width:1279px;height:1px;background:#ebebeb"></div>
<div style="left:621px;top:529px;width:206px;height:1px;background:#efefef"></div>
<div style="left:1035px;top:529px;width:247px;height:1px;background:#efefef"></div>
<div style="left:54px;top:502px;width:1px;height:28px;background:#f0f0f0"></div>
<div class="t" style="left:63px;top:509.15px;font-size:14px;line-height:14px;color:#161616;">LS</div>
<div class="t" style="left:240px;top:509.15px;font-size:14px;line-height:14px;color:#161616;">2024/PAR/M0/000015</div>
<div class="t" style="left:400.5px;top:509.15px;font-size:14px;line-height:14px;color:#161616;">2024-04-12</div>
<div class="t" style="left:490.5px;width:69px;overflow:hidden;top:509.15px;font-size:14px;line-height:14px;color:#161616;">2024-04-12</div>
<div class="t" style="left:572.5px;top:509.15px;font-size:14px;line-height:14px;color:#161616;">PLN</div>
<div class="t" style="left:487.90px;width:200px;text-align:right;top:509.15px;font-size:14px;line-height:14px;color:#161616">282,31</div>
<div class="t" style="left:551.90px;width:200px;text-align:right;top:509.15px;font-size:14px;line-height:14px;color:#161616">64,93</div>
<div class="t" style="left:622.90px;width:200px;text-align:right;top:509.15px;font-size:14px;line-height:14px;color:#161616">347,24</div>
<div class="t" style="left:933px;top:509.15px;font-size:14px;line-height:14px;color:#161616;">PAR/M0/24/15</div>
<div class="t" style="left:910.40px;width:200px;text-align:right;top:509.15px;font-size:14px;line-height:14px;color:#161616">282,31</div>
<div class="t" style="left:992.40px;width:200px;text-align:right;top:509.15px;font-size:14px;line-height:14px;color:#161616">64,93</div>
<div class="t" style="left:1077.70px;width:200px;text-align:right;top:509.15px;font-size:14px;line-height:14px;color:#161616">347,24</div>
<div style="left:31px;top:508px;width:15px;height:15px;box-sizing:border-box;border:1px solid #cfcfcf;border-radius:3px;background:#fff"></div>
<svg style="position:absolute;left:137px;top:505px" width="18" height="21" viewBox="0 0 18 21"><path d="M1.1 1.1 H11 L16.4 6.5 V19.8 H1.1 Z" fill="#fff" stroke="#4a4a4a" stroke-width="1.5"/><path d="M11 1.1 V6.5 H16.4" fill="none" stroke="#4a4a4a" stroke-width="1.1"/><rect x="3.6" y="5" width="3.6" height="1" fill="#666"/><rect x="3.6" y="7.2" width="8.8" height="1.3" fill="#777"/><rect x="3.1" y="10.5" width="10.8" height="7.2" fill="#fff" stroke="#555" stroke-width="0.9"/><rect x="3.1" y="10.5" width="10.8" height="3.3" fill="#3a80c8"/><rect x="8.1" y="10.5" width="0.9" height="7.2" fill="#555"/></svg>
<div style="left:196px;top:506px;width:19px;height:19px;box-sizing:border-box;border:1.3px solid #b8b8b8;border-radius:3px;background:#fff"></div>
<div style="left:868px;top:506px;width:19px;height:19px;box-sizing:border-box;border:1.3px solid #b8b8b8;border-radius:3px;background:#fff"></div>
<svg style="position:absolute;left:868px;top:506px" width="19" height="19" viewBox="0 0 19 19"><path d="M4.4 8.4 L10.4 13.6 L17.6 3.4" fill="none" stroke="#fff" stroke-width="5"/><path d="M4.4 8.4 L10.4 13.6 L17.6 3.4" fill="none" stroke="#0a72b8" stroke-width="2.8"/></svg>
<div style="left:621px;top:530px;width:206px;height:27px;background:#bbdef8"></div>
<div style="left:756px;top:530px;width:1px;height:27px;background:#fff"></div>
<div style="left:924px;top:530px;width:111px;height:27px;background:#fdfde4"></div>
<div style="left:1035px;top:530px;width:247px;height:27px;background:#bbdef8"></div>
<div style="left:21px;top:556px;width:1279px;height:1px;background:#ebebeb"></div>
<div style="left:621px;top:556px;width:206px;height:1px;background:#efefef"></div>
<div style="left:1035px;top:556px;width:247px;height:1px;background:#efefef"></div>
<div style="left:54px;top:530px;width:1px;height:27px;background:#f0f0f0"></div>
<div class="t" style="left:63px;top:536.15px;font-size:14px;line-height:14px;color:#161616;">LS</div>
<div class="t" style="left:240px;top:536.15px;font-size:14px;line-height:14px;color:#161616;">2024/PAR/M0/000016</div>
<div class="t" style="left:400.5px;top:536.15px;font-size:14px;line-height:14px;color:#161616;">2024-04-12</div>
<div class="t" style="left:490.5px;width:69px;overflow:hidden;top:536.15px;font-size:14px;line-height:14px;color:#161616;">2024-04-12</div>
<div class="t" style="left:572.5px;top:536.15px;font-size:14px;line-height:14px;color:#161616;">PLN</div>
<div class="t" style="left:487.90px;width:200px;text-align:right;top:536.15px;font-size:14px;line-height:14px;color:#161616">4 249,00</div>
<div class="t" style="left:551.90px;width:200px;text-align:right;top:536.15px;font-size:14px;line-height:14px;color:#161616">977,27</div>
<div class="t" style="left:622.90px;width:200px;text-align:right;top:536.15px;font-size:14px;line-height:14px;color:#161616">5 226,27</div>
<div class="t" style="left:933px;top:536.15px;font-size:14px;line-height:14px;color:#161616;">PAR/M0/24/16</div>
<div class="t" style="left:910.40px;width:200px;text-align:right;top:536.15px;font-size:14px;line-height:14px;color:#161616">4 249,00</div>
<div class="t" style="left:992.40px;width:200px;text-align:right;top:536.15px;font-size:14px;line-height:14px;color:#161616">977,27</div>
<div class="t" style="left:1077.70px;width:200px;text-align:right;top:536.15px;font-size:14px;line-height:14px;color:#161616">5 226,27</div>
<div style="left:31px;top:536px;width:15px;height:15px;box-sizing:border-box;border:1px solid #cfcfcf;border-radius:3px;background:#fff"></div>
<svg style="position:absolute;left:137px;top:533px" width="18" height="21" viewBox="0 0 18 21"><path d="M1.1 1.1 H11 L16.4 6.5 V19.8 H1.1 Z" fill="#fff" stroke="#4a4a4a" stroke-width="1.5"/><path d="M11 1.1 V6.5 H16.4" fill="none" stroke="#4a4a4a" stroke-width="1.1"/><rect x="3.6" y="5" width="3.6" height="1" fill="#666"/><rect x="3.6" y="7.2" width="8.8" height="1.3" fill="#777"/><rect x="3.1" y="10.5" width="10.8" height="7.2" fill="#fff" stroke="#555" stroke-width="0.9"/><rect x="3.1" y="10.5" width="10.8" height="3.3" fill="#3a80c8"/><rect x="8.1" y="10.5" width="0.9" height="7.2" fill="#555"/></svg>
<div style="left:196px;top:534px;width:19px;height:19px;box-sizing:border-box;border:1.3px solid #b8b8b8;border-radius:3px;background:#fff"></div>
<div style="left:868px;top:534px;width:19px;height:19px;box-sizing:border-box;border:1.3px solid #b8b8b8;border-radius:3px;background:#fff"></div>
<svg style="position:absolute;left:868px;top:534px" width="19" height="19" viewBox="0 0 19 19"><path d="M4.4 8.4 L10.4 13.6 L17.6 3.4" fill="none" stroke="#fff" stroke-width="5"/><path d="M4.4 8.4 L10.4 13.6 L17.6 3.4" fill="none" stroke="#0a72b8" stroke-width="2.8"/></svg>
<div style="left:621px;top:557px;width:206px;height:28px;background:#bbdef8"></div>
<div style="left:756px;top:557px;width:1px;height:28px;background:#fff"></div>
<div style="left:924px;top:557px;width:111px;height:28px;background:#fdfde4"></div>
<div style="left:1035px;top:557px;width:247px;height:28px;background:#bbdef8"></div>
<div style="left:21px;top:584px;width:1279px;height:1px;background:#ebebeb"></div>
<div style="left:621px;top:584px;width:206px;height:1px;background:#efefef"></div>
<div style="left:1035px;top:584px;width:247px;height:1px;background:#efefef"></div>
<div style="left:54px;top:557px;width:1px;height:28px;background:#f0f0f0"></div>
<div class="t" style="left:63px;top:564.15px;font-size:14px;line-height:14px;color:#161616;">LS</div>
<div class="t" style="left:240px;top:564.15px;font-size:14px;line-height:14px;color:#161616;">2024/PARD/M0/000001</div>
<div class="t" style="left:400.5px;top:564.15px;font-size:14px;line-height:14px;color:#161616;">2024-04-12</div>
<div class="t" style="left:490.5px;width:69px;overflow:hidden;top:564.15px;font-size:14px;line-height:14px;color:#161616;">2024-04-12</div>
<div class="t" style="left:572.5px;top:564.15px;font-size:14px;line-height:14px;color:#161616;">PLN</div>
<div class="t" style="left:487.90px;width:200px;text-align:right;top:564.15px;font-size:14px;line-height:14px;color:#161616">846,93</div>
<div class="t" style="left:551.90px;width:200px;text-align:right;top:564.15px;font-size:14px;line-height:14px;color:#161616">194,79</div>
<div class="t" style="left:622.90px;width:200px;text-align:right;top:564.15px;font-size:14px;line-height:14px;color:#161616">1 041,72</div>
<div class="t" style="left:933px;top:564.15px;font-size:14px;line-height:14px;color:#161616;">PARD/M0/24/1</div>
<div class="t" style="left:910.40px;width:200px;text-align:right;top:564.15px;font-size:14px;line-height:14px;color:#161616">846,93</div>
<div class="t" style="left:992.40px;width:200px;text-align:right;top:564.15px;font-size:14px;line-height:14px;color:#161616">194,79</div>
<div class="t" style="left:1077.70px;width:200px;text-align:right;top:564.15px;font-size:14px;line-height:14px;color:#161616">1 041,72</div>
<div style="left:31px;top:563px;width:15px;height:15px;box-sizing:border-box;border:1px solid #cfcfcf;border-radius:3px;background:#fff"></div>
<svg style="position:absolute;left:137px;top:560px" width="18" height="21" viewBox="0 0 18 21"><path d="M1.1 1.1 H11 L16.4 6.5 V19.8 H1.1 Z" fill="#fff" stroke="#4a4a4a" stroke-width="1.5"/><path d="M11 1.1 V6.5 H16.4" fill="none" stroke="#4a4a4a" stroke-width="1.1"/><rect x="3.6" y="5" width="3.6" height="1" fill="#666"/><rect x="3.6" y="7.2" width="8.8" height="1.3" fill="#777"/><rect x="3.1" y="10.5" width="10.8" height="7.2" fill="#fff" stroke="#555" stroke-width="0.9"/><rect x="3.1" y="10.5" width="10.8" height="3.3" fill="#3a80c8"/><rect x="8.1" y="10.5" width="0.9" height="7.2" fill="#555"/></svg>
<div style="left:196px;top:561px;width:19px;height:19px;box-sizing:border-box;border:1.3px solid #b8b8b8;border-radius:3px;background:#fff"></div>
<div style="left:868px;top:561px;width:19px;height:19px;box-sizing:border-box;border:1.3px solid #b8b8b8;border-radius:3px;background:#fff"></div>
<svg style="position:absolute;left:868px;top:561px" width="19" height="19" viewBox="0 0 19 19"><path d="M4.4 8.4 L10.4 13.6 L17.6 3.4" fill="none" stroke="#fff" stroke-width="5"/><path d="M4.4 8.4 L10.4 13.6 L17.6 3.4" fill="none" stroke="#0a72b8" stroke-width="2.8"/></svg>
<div style="left:621px;top:585px;width:206px;height:27px;background:#bbdef8"></div>
<div style="left:756px;top:585px;width:1px;height:27px;background:#fff"></div>
<div style="left:924px;top:585px;width:111px;height:27px;background:#fdfde4"></div>
<div style="left:1035px;top:585px;width:247px;height:27px;background:#bbdef8"></div>
<div style="left:21px;top:611px;width:1279px;height:1px;background:#ebebeb"></div>
<div style="left:621px;top:611px;width:206px;height:1px;background:#efefef"></div>
<div style="left:1035px;top:611px;width:247px;height:1px;background:#efefef"></div>
<div style="left:54px;top:585px;width:1px;height:27px;background:#f0f0f0"></div>
<div class="t" style="left:63px;top:591.15px;font-size:14px;line-height:14px;color:#161616;">LS</div>
<div class="t" style="left:240px;top:591.15px;font-size:14px;line-height:14px;color:#161616;">2024/PARD/M0/000002</div>
<div class="t" style="left:400.5px;top:591.15px;font-size:14px;line-height:14px;color:#161616;">2024-04-12</div>
<div class="t" style="left:490.5px;width:69px;overflow:hidden;top:591.15px;font-size:14px;line-height:14px;color:#161616;">2024-04-12</div>
<div class="t" style="left:572.5px;top:591.15px;font-size:14px;line-height:14px;color:#161616;">PLN</div>
<div class="t" style="left:487.90px;width:200px;text-align:right;top:591.15px;font-size:14px;line-height:14px;color:#161616">651,82</div>
<div class="t" style="left:551.90px;width:200px;text-align:right;top:591.15px;font-size:14px;line-height:14px;color:#161616">149,92</div>
<div class="t" style="left:622.90px;width:200px;text-align:right;top:591.15px;font-size:14px;line-height:14px;color:#161616">801,74</div>
<div class="t" style="left:933px;top:591.15px;font-size:14px;line-height:14px;color:#161616;">PARD/M0/24/2</div>
<div class="t" style="left:910.40px;width:200px;text-align:right;top:591.15px;font-size:14px;line-height:14px;color:#161616">651,82</div>
<div class="t" style="left:992.40px;width:200px;text-align:right;top:591.15px;font-size:14px;line-height:14px;color:#161616">149,92</div>
<div class="t" style="left:1077.70px;width:200px;text-align:right;top:591.15px;font-size:14px;line-height:14px;color:#161616">801,74</div>
<div style="left:31px;top:591px;width:15px;height:15px;box-sizing:border-box;border:1px solid #cfcfcf;border-radius:3px;background:#fff"></div>
<svg style="position:absolute;left:137px;top:588px" width="18" height="21" viewBox="0 0 18 21"><path d="M1.1 1.1 H11 L16.4 6.5 V19.8 H1.1 Z" fill="#fff" stroke="#4a4a4a" stroke-width="1.5"/><path d="M11 1.1 V6.5 H16.4" fill="none" stroke="#4a4a4a" stroke-width="1.1"/><rect x="3.6" y="5" width="3.6" height="1" fill="#666"/><rect x="3.6" y="7.2" width="8.8" height="1.3" fill="#777"/><rect x="3.1" y="10.5" width="10.8" height="7.2" fill="#fff" stroke="#555" stroke-width="0.9"/><rect x="3.1" y="10.5" width="10.8" height="3.3" fill="#3a80c8"/><rect x="8.1" y="10.5" width="0.9" height="7.2" fill="#555"/></svg>
<div style="left:196px;top:589px;width:19px;height:19px;box-sizing:border-box;border:1.3px solid #b8b8b8;border-radius:3px;background:#fff"></div>
<div style="left:868px;top:589px;width:19px;height:19px;box-sizing:border-box;border:1.3px solid #b8b8b8;border-radius:3px;background:#fff"></div>
<svg style="position:absolute;left:868px;top:589px" width="19" height="19" viewBox="0 0 19 19"><path d="M4.4 8.4 L10.4 13.6 L17.6 3.4" fill="none" stroke="#fff" stroke-width="5"/><path d="M4.4 8.4 L10.4 13.6 L17.6 3.4" fill="none" stroke="#0a72b8" stroke-width="2.8"/></svg>
<div style="left:25px;top:450px;width:29px;height:22px;background:#efefef"></div>
<div style="left:31px;top:454px;width:15px;height:15px;box-sizing:border-box;border:1px solid #cfcfcf;border-radius:3px;background:#fff"></div>
<div style="left:21px;top:447px;width:1279px;height:3px;background:#5c5c5c"></div>
<div style="left:21px;top:472px;width:1279px;height:3px;background:#5c5c5c"></div>
<div style="left:21px;top:450px;width:4px;height:22px;background:#0a78c0"></div>
<div style="left:55px;top:447px;width:61px;height:28px;border:4px solid #0a72b8;box-sizing:border-box;background:#fff"></div>
<div class="t" style="left:63px;top:454.15px;font-size:14px;line-height:14px;color:#161616;">LS</div>
<div style="left:21px;top:49px;width:18px;height:2.2px;background:#2e2e2e"></div>
<div style="left:21px;top:54px;width:18px;height:2.2px;background:#2e2e2e"></div>
<div style="left:21px;top:59px;width:18px;height:2.2px;background:#2e2e2e"></div>
<svg style="left:26px;top:84px" width="20" height="20" viewBox="0 0 20 20"><rect x="4.5" y="0.8" width="11" height="5.6" fill="none" stroke="#333" stroke-width="1.3"/><path d="M4.2 15.4 H0.8 V6.4 H19.2 V15.4 H15.8" fill="none" stroke="#333" stroke-width="1.3"/><rect x="4.5" y="11.5" width="11" height="7.8" fill="#fff" stroke="#333" stroke-width="1.3"/><path d="M6.4 14.3 H13.6 M6.4 16.7 H13.6" stroke="#8a8a8a" stroke-width="1"/><path d="M2.1 9.5 H4.6" stroke="#2a8ad8" stroke-width="1.2"/></svg>
<svg style="left:55px;top:90px" width="10" height="7" viewBox="0 0 10 7"><path d="M1 1.2 L5 5.2 L9 1.2" fill="none" stroke="#222" stroke-width="1.5"/></svg>
<svg style="left:83px;top:84px" width="21" height="20" viewBox="0 0 21 20"><rect x="0.6" y="7.8" width="5" height="11.6" fill="#b9ddb9" stroke="#1a9e48" stroke-width="1.2"/><rect x="7.6" y="0.8" width="4.8" height="18.6" fill="#fad98c" stroke="#ee8a2c" stroke-width="1.2"/><rect x="14.6" y="4.8" width="5" height="14.6" fill="#f4c0c0" stroke="#e43c3c" stroke-width="1.2"/></svg>
<svg style="left:108px;top:90px" width="10" height="7" viewBox="0 0 10 7"><path d="M1 1.2 L5 5.2 L9 1.2" fill="none" stroke="#222" stroke-width="1.5"/></svg>
<svg style="left:26px;top:370px" width="20" height="20" viewBox="0 0 20 20"><rect x="4.5" y="0.8" width="11" height="5.6" fill="none" stroke="#333" stroke-width="1.3"/><path d="M4.2 15.4 H0.8 V6.4 H19.2 V15.4 H15.8" fill="none" stroke="#333" stroke-width="1.3"/><rect x="4.5" y="11.5" width="11" height="7.8" fill="#fff" stroke="#333" stroke-width="1.3"/><path d="M6.4 14.3 H13.6 M6.4 16.7 H13.6" stroke="#8a8a8a" stroke-width="1"/><path d="M2.1 9.5 H4.6" stroke="#2a8ad8" stroke-width="1.2"/></svg>
<svg style="left:55px;top:376px" width="10" height="7" viewBox="0 0 10 7"><path d="M1 1.2 L5 5.2 L9 1.2" fill="none" stroke="#222" stroke-width="1.5"/></svg>
<svg style="left:83px;top:370px" width="21" height="20" viewBox="0 0 21 20"><rect x="0.6" y="7.8" width="5" height="11.6" fill="#b9ddb9" stroke="#1a9e48" stroke-width="1.2"/><rect x="7.6" y="0.8" width="4.8" height="18.6" fill="#fad98c" stroke="#ee8a2c" stroke-width="1.2"/><rect x="14.6" y="4.8" width="5" height="14.6" fill="#f4c0c0" stroke="#e43c3c" stroke-width="1.2"/></svg>
<svg style="left:108px;top:376px" width="10" height="7" viewBox="0 0 10 7"><path d="M1 1.2 L5 5.2 L9 1.2" fill="none" stroke="#222" stroke-width="1.5"/></svg>
<div class="t" style="left:34px;top:123.83px;font-size:13.2px;line-height:13.2px;color:#666;">Data</div>
<div class="t" style="left:68.5px;top:123.83px;font-size:13.2px;line-height:13.2px;color:#666;">od:</div>
<div class="t" style="left:90.5px;top:123.15px;font-size:14px;line-height:14px;color:#262626;-webkit-text-stroke:0.3px #262626">2024-06-12</div>
<div class="t" style="left:168.5px;top:123.83px;font-size:13.2px;line-height:13.2px;color:#666;">do:</div>
<div class="t" style="left:191px;top:123.15px;font-size:14px;line-height:14px;color:#262626;-webkit-text-stroke:0.3px #262626">2024-06-12</div>
<div class="t" style="left:309px;top:123.83px;font-size:13.2px;line-height:13.2px;color:#666;">Stan:</div>
<div class="t" style="left:344px;top:123.4px;font-size:13.7px;line-height:13.7px;color:#262626;-webkit-text-stroke:0.3px #262626">Anulowany, Edycja, Brulion, Dziennik</div>
<svg style="left:272px;top:124px" width="12" height="12" viewBox="0 0 12 12"><path d="M1.2 1.2 L10.8 10.8 M10.8 1.2 L1.2 10.8" stroke="#a6a6a6" stroke-width="1.15"/></svg>
<svg style="left:578px;top:124px" width="12" height="12" viewBox="0 0 12 12"><path d="M1.2 1.2 L10.8 10.8 M10.8 1.2 L1.2 10.8" stroke="#a6a6a6" stroke-width="1.15"/></svg>
<svg style="left:1200px;top:74px" width="40" height="32" viewBox="0 0 40 32"><path d="M26.01 20.86 L28.23 21.27 L28.23 24.33 L26.01 24.74 L25.38 25.82 L26.14 27.95 L23.49 29.48 L22.03 27.76 L20.77 27.76 L19.31 29.48 L16.66 27.95 L17.42 25.82 L16.79 24.74 L14.57 24.33 L14.57 21.27 L16.79 20.86 L17.42 19.78 L16.66 17.65 L19.31 16.12 L20.77 17.84 L22.03 17.84 L23.49 16.12 L26.14 17.65 L25.38 19.78 Z" fill="#fff" stroke="#333" stroke-width="1.2" stroke-linejoin="round"/><circle cx="21.4" cy="22.8" r="2.1" fill="none" stroke="#333" stroke-width="1.2"/><path d="M32.66 12.70 L34.22 13.06 L34.22 14.74 L32.66 15.10 L32.27 15.77 L32.74 17.31 L31.28 18.15 L30.19 16.98 L29.41 16.98 L28.32 18.15 L26.86 17.31 L27.33 15.77 L26.94 15.10 L25.38 14.74 L25.38 13.06 L26.94 12.70 L27.33 12.03 L26.86 10.49 L28.32 9.65 L29.41 10.82 L30.19 10.82 L31.28 9.65 L32.74 10.49 L32.27 12.03 Z" fill="#fff" stroke="#333" stroke-width="1.05" stroke-linejoin="round"/><circle cx="29.8" cy="13.9" r="1.3" fill="none" stroke="#333" stroke-width="1"/><rect x="8" y="3" width="10" height="19.8" fill="#e4b95e"/><rect x="12.1" y="5.6" width="1.8" height="10.6" rx="0.6" fill="#1f2430"/><rect x="12.1" y="18.2" width="1.8" height="2" rx="0.5" fill="#1f2430"/></svg>
<svg style="left:1243px;top:90px" width="10" height="7" viewBox="0 0 10 7"><path d="M1 1.2 L5 5.2 L9 1.2" fill="none" stroke="#222" stroke-width="1.5"/></svg>
<svg style="left:1264px;top:78px" width="32" height="32" viewBox="0 0 32 32" fill="none" stroke="#262626" stroke-width="1.4"><path d="M6.4 14.8 A9.7 9.7 0 0 1 24.8 12.2"/><path d="M25.5 6 V12.8 H18.6"/><path d="M25.6 17.2 A9.7 9.7 0 0 1 7.2 19.8"/><path d="M6.4 25.8 V19 H13.4"/></svg>
<svg style="left:1184px;top:45px" width="20" height="19" viewBox="0 0 20 19" fill="none"><path d="M1.5 1.2 V13.6" stroke="#333" stroke-width="1.3"/><rect x="1.5" y="1.8" width="5.4" height="4.2" stroke="#333" stroke-width="1.2"/><rect x="6.9" y="2.8" width="11.4" height="3.4" fill="#444"/><path d="M8 4.5 H10.4 M11.8 4.5 H14.2 M15.6 4.5 H17.4" stroke="#eee" stroke-width="1"/><path d="M6.2 9.5 H19" stroke="#2a2a2a" stroke-width="1.1"/><path d="M6.2 12 H19" stroke="#777" stroke-width="1.1"/><path d="M6.2 14.4 H19" stroke="#2a2a2a" stroke-width="1.1"/><path d="M6.2 16.8 H19" stroke="#666" stroke-width="1.1"/></svg>
<svg style="left:1228px;top:43px" width="22" height="21" viewBox="0 0 22 21" fill="none" stroke="#1a6faf" stroke-width="1.4"><path d="M6 5.5 H2.5 V18.8 H16.8 V12"/><path d="M5.3 14 C5.8 9 8.8 6.6 12.6 6.6 V3 L19.2 7.3 L12.6 12.6 V9.6 C9.6 9.6 7 11 5.3 14 Z" stroke-width="1.25" stroke-linejoin="round"/></svg>
<svg style="left:1273px;top:41px" width="24" height="24" viewBox="0 0 24 24" fill="none" stroke="#1a86cf" stroke-width="1.5" stroke-linecap="round"><path d="M12.2 2.4 V3" stroke-width="1.8"/><path d="M1.6 12.4 H3.6 M20.8 12.4 H22.8 M4 5.2 L5.2 6.4 M20.4 5.2 L19.2 6.4"/><path d="M10.49 18.58 A6.6 6.6 0 1 1 15.3 18.03 Q13.3 19.2 12.5 21"/></svg>
<div style="left:24.8px;top:335.5px;width:2.4px;height:2.4px;background:#444;border-radius:1px"></div>
<div style="left:24.8px;top:340.5px;width:2.4px;height:2.4px;background:#444;border-radius:1px"></div>
<div style="left:24.8px;top:345.5px;width:2.4px;height:2.4px;background:#444;border-radius:1px"></div>
<svg style="left:1145px;top:369px" width="23" height="22" viewBox="0 0 23 22" fill="none" stroke="#333" stroke-width="1.2"><path d="M8 19.6 H1.6 V1.6 H19.6 V9"/><path d="M1.6 4.4 H19.6" stroke-width="2.4"/><circle cx="13" cy="14" r="4.2"/><path d="M16 17 L20.6 21"/></svg>
<div class="t" style="left:1170px;top:372.15px;font-size:14px;line-height:14px;color:#222;">Podgląd</div>
<svg style="left:1234px;top:370px" width="21" height="22" viewBox="0 0 21 22" fill="none" stroke="#333" stroke-width="1.2"><path d="M1 1.2 H19.6 L12.4 10.4 V21 H8.4 V10.4 Z" stroke-linejoin="round"/></svg>
<div class="t" style="left:1257.5px;top:372.15px;font-size:14px;line-height:14px;color:#222;">Filtruj</div>
<div style="left:1235px;top:389px;width:33px;height:16px;background:#fff;border:1px solid #e3e3e3;border-radius:8px;box-sizing:border-box"></div>
<svg style="left:1244px;top:393px" width="14" height="8" viewBox="0 0 14 8"><path d="M1.5 1.5 L7 6 L12.5 1.5" fill="none" stroke="#aaa" stroke-width="1.3"/></svg>
<svg style="left:148px;top:7px" width="24" height="22" viewBox="0 0 24 22" fill="none" stroke="#fff" stroke-width="1.3" stroke-linejoin="round" stroke-linecap="round"><path d="M4.2 15.4 Q2.6 15.4 2.6 14 V5.6 L12 1.5 Q12.6 1.5 12.6 2.8"/><path d="M8.2 17.8 Q6.6 17.8 6.6 16.4 V8.2 L16 4.3 Q16.6 4.3 16.6 5.6"/><path d="M11.5 11.2 L20.6 6.9 Q21.2 6.7 21.2 7.4 V16.2 L12.2 20.4 Q11.5 20.7 11.5 20 Z"/></svg>
<svg style="left:203px;top:9px" width="19" height="18" viewBox="0 0 19 18" fill="none" stroke="#fff" stroke-width="1.3" stroke-linejoin="round" stroke-linecap="round"><path d="M1.4 8.6 L9.4 1.4 L17.6 8.6"/><path d="M3.7 7 V16.6 H7.3 V12.7 H11.4 V16.6 H15.3 V7"/></svg>
<svg style="left:242px;top:9px" width="22" height="18" viewBox="0 0 22 18" fill="none" stroke="#fff" stroke-width="1.25"><path d="M4.6 1.1 H20.8 V16.6 H1.2 V2.4 H4.6 Z M4.6 2.4 V16.6"/><rect x="6.6" y="5.6" width="5" height="4.8"/><path d="M13.8 5.2 H18.2 M13.8 7.7 H18.2 M13.8 10.4 H18.2 M6.4 12.6 H11.8 M13.8 12.6 H18.2" stroke-width="1.1"/></svg>
<svg style="left:284px;top:7px" width="21" height="21" viewBox="0 0 21 21"><path d="M1.6 1.6 H17 Q19.4 1.6 19.4 4 V19.4 H4 Q1.6 19.4 1.6 17 Z" fill="none" stroke="#fff" stroke-width="1.2"/><text x="5.6" y="16" font-family="Liberation Sans" font-weight="700" font-size="7.8" fill="#fff">BC</text></svg>
<svg style="left:304px;top:4px" width="12" height="28" viewBox="0 0 12 28"><path d="M9 2 L3 27" stroke="#5aa0cf" stroke-width="0.8" stroke-dasharray="3 4"/></svg>
<svg style="left:529px;top:7px" width="19" height="19" viewBox="0 0 19 19" fill="none" stroke="#1b6fa8" stroke-width="1.5"><circle cx="8" cy="8" r="6.4"/><path d="M12.6 12.6 L17.6 17.6"/></svg>
<svg style="left:1079px;top:13px" width="12" height="8" viewBox="0 0 12 8"><path d="M1.5 1.5 L6 6 L10.5 1.5" fill="none" stroke="#fff" stroke-width="2"/></svg>
<svg style="left:1109px;top:8px" width="18" height="18" viewBox="0 0 18 18" fill="none" stroke="#fff" stroke-width="1.2"><circle cx="9" cy="9" r="7.8"/><path d="M6.3 6.4 A2.7 2.7 0 1 1 10 8.9 Q9 9.5 9 10.8 V11.6"/><circle cx="9" cy="13.9" r="0.5" fill="#fff" stroke-width="0.8"/></svg>
<svg style="left:1144px;top:7px" width="18" height="21" viewBox="0 0 18 21" fill="none" stroke="#fff" stroke-width="1.3" stroke-linejoin="round"><path d="M9 1 V2.4"/><path d="M3.2 16 V8.6 A5.8 5.8 0 0 1 14.8 8.6 V16 H16.8 V16.6 H1.2 V16 Z"/><path d="M7 19.4 H11" stroke-width="1.6"/></svg>
<div style="left:1184px;top:11px;width:3px;height:3px;background:#fff"></div>
<div style="left:1184px;top:16px;width:3px;height:3px;background:#fff"></div>
<div style="left:1184px;top:21px;width:3px;height:3px;background:#fff"></div>
<div style="left:1210px;top:8px;width:1px;height:19px;background:#3ea2dc"></div>
<div style="left:1231px;top:19px;width:12px;height:1.3px;background:#fff"></div>
<div style="left:1265px;top:10px;width:12px;height:12px;border:1.3px solid #fff;box-sizing:border-box"></div>
<svg style="left:1299px;top:10px" width="13" height="13" viewBox="0 0 13 13"><path d="M1.2 1.2 L11.8 11.8 M11.8 1.2 L1.2 11.8" stroke="#fff" stroke-width="1.3"/></svg>
<div style="left:1320px;top:0px;width:1px;height:633px;background:#808080"></div>
<div style="left:0px;top:632px;width:1321px;height:1px;background:#9a9a9a"></div>
</div>
</body></html>
